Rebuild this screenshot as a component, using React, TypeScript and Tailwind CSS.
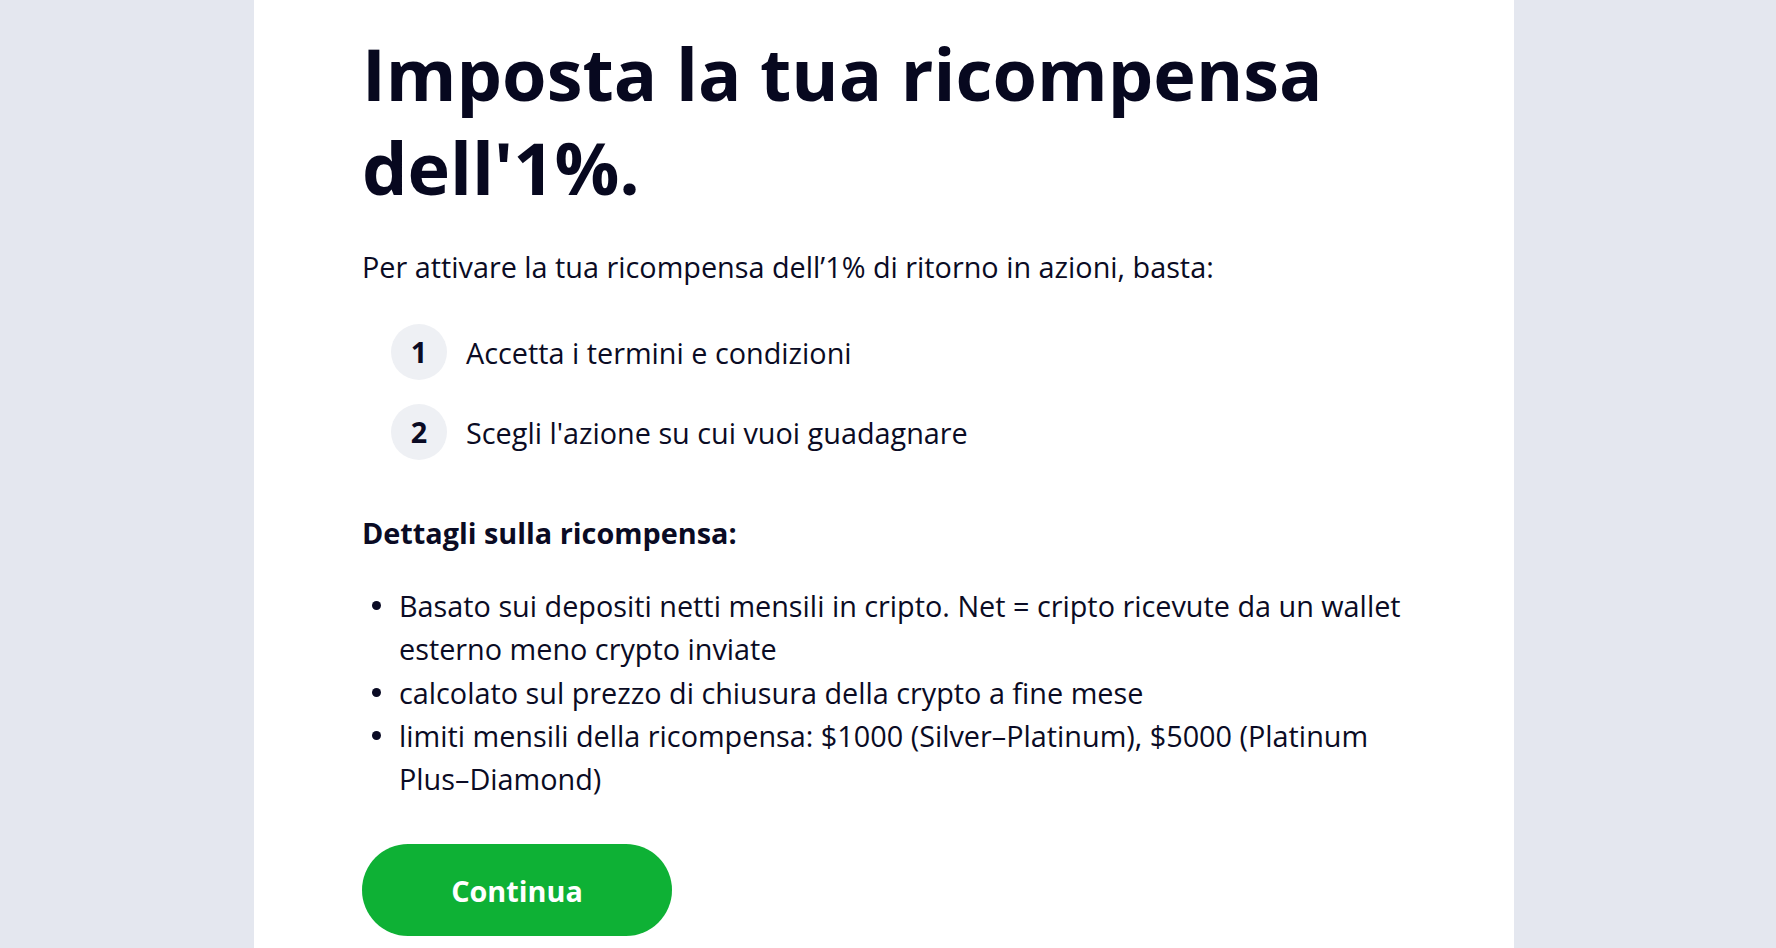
import React from 'react';

const steps = ['Accetta i termini e condizioni', "Scegli l'azione su cui vuoi guadagnare"];

const details = [
  'Basato sui depositi netti mensili in cripto. Net = cripto ricevute da un wallet esterno meno crypto inviate',
  'calcolato sul prezzo di chiusura della crypto a fine mese',
  'limiti mensili della ricompensa: $1000 (Silver–Platinum), $5000 (Platinum Plus–Diamond)',
];

export default function App() {
  return (
    <div className="h-[948px] overflow-hidden bg-[#e4e7ef] font-['Open_Sans',sans-serif] text-[#0a0b24]">
      <div className="ml-[254px] w-[1260px] h-full bg-white pl-[108px] pt-[26px]">
        <div className="w-[1058px]">
          {/* Title */}
          <h1 className="text-[72px] leading-[94px] font-bold text-[#07081f]">
            Imposta la tua ricompensa dell'1%.
          </h1>

          <p className="mt-[31px] text-[28.8px] leading-[43px]">
            Per attivare la tua ricompensa dell’1% di ritorno in azioni, basta:
          </p>

          {/* Steps */}
          <div className="mt-[36px] ml-[29px] flex flex-col gap-[24px]">
            {steps.map((s, i) => (
              <div key={i} className="flex items-center gap-[19px]">
                <div className="w-14 h-14 rounded-full bg-[#eef0f4] flex items-center justify-center text-[28.8px] font-bold">
                  {i + 1}
                </div>
                <span className="text-[28.8px] leading-[43px]">{s}</span>
              </div>
            ))}
          </div>

          <h2 className="mt-[51px] text-[28.8px] leading-[43px] font-bold">Dettagli sulla ricompensa:</h2>

          <ul className="mt-[30px]">
            {details.map((d, i) => (
              <li key={i} className="flex text-[28.8px] leading-[43.25px]">
                <span className="w-[37px] h-[43px] shrink-0 flex items-center pl-[10px]">
                  <span className="w-[9px] h-[9px] rounded-full bg-[#0a0b24]" />
                </span>
                <span>{d}</span>
              </li>
            ))}
          </ul>

          <button className="mt-[44px] w-[310px] h-[92px] rounded-full bg-[#0eb135] text-white text-[28.8px] font-bold">
            Continua
          </button>
        </div>
      </div>
    </div>
  );
}
